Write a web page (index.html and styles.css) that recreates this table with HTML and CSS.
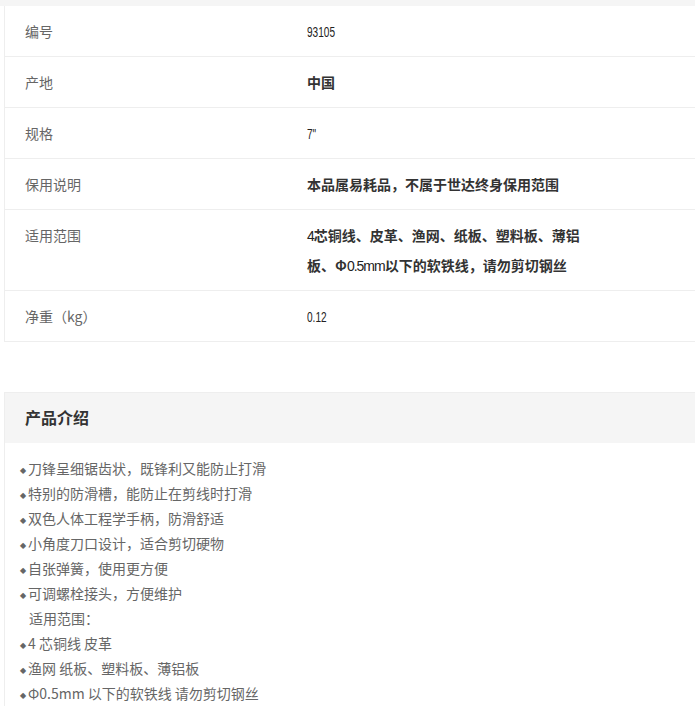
FILE: index.html
```html
<!DOCTYPE html>
<html lang="zh-CN">
<head>
    <meta charset="UTF-8">
    <meta name="viewport" content="width=device-width, initial-scale=1.0">
    <title>产品参数</title>
    <link rel="stylesheet" href="styles.css">
</head>
<body>
    <div class="top-strip"></div>

    <div class="specs">
        <div class="row">
            <div class="label">编号</div>
            <div class="value"><span class="num">93105</span></div>
        </div>
        <div class="row">
            <div class="label">产地</div>
            <div class="value">中国</div>
        </div>
        <div class="row">
            <div class="label">规格</div>
            <div class="value"><span class="num">7"</span></div>
        </div>
        <div class="row">
            <div class="label">保用说明</div>
            <div class="value">本品属易耗品，不属于世达终身保用范围</div>
        </div>
        <div class="row">
            <div class="label">适用范围</div>
            <div class="value"><span class="digits">4</span>芯铜线、皮革、渔网、纸板、塑料板、薄铝板、Φ<span class="digits">0.5mm</span>以下的软铁线，请勿剪切钢丝</div>
        </div>
        <div class="row">
            <div class="label">净重（kg）</div>
            <div class="value"><span class="num">0.12</span></div>
        </div>
    </div>

    <section class="intro">
        <h2>产品介绍</h2>
        <ul class="points">
            <li><span class="dot">◆</span>刀锋呈细锯齿状，既锋利又能防止打滑</li>
            <li><span class="dot">◆</span>特别的防滑槽，能防止在剪线时打滑</li>
            <li><span class="dot">◆</span>双色人体工程学手柄，防滑舒适</li>
            <li><span class="dot">◆</span>小角度刀口设计，适合剪切硬物</li>
            <li><span class="dot">◆</span>自张弹簧，使用更方便</li>
            <li><span class="dot">◆</span>可调螺栓接头，方便维护</li>
            <li class="indent">适用范围：</li>
            <li><span class="dot">◆</span>4 芯铜线 皮革</li>
            <li><span class="dot">◆</span>渔网 纸板、塑料板、薄铝板</li>
            <li><span class="dot">◆</span>Φ0.5mm 以下的软铁线 请勿剪切钢丝</li>
        </ul>
    </section>
</body>
</html>
```

FILE: styles.css
```css
body {
    margin: 0;
    padding: 0;
    background-color: #fff;
    font-family: "Noto Sans CJK SC", "Liberation Sans", sans-serif;
    font-size: 14px;
    color: #666;
    overflow: hidden;
}
.top-strip {
    height: 6px;
    background-color: #f5f5f5;
}
.specs {
    margin-left: 4px;
    border-left: 1px solid #eee;
}
.row {
    display: grid;
    grid-template-columns: 302px 1fr;
    padding: 10px 0;
    line-height: 30px;
    border-bottom: 1px solid #eee;
}
.label {
    padding-left: 20px;
    color: #666;
}
.value {
    max-width: 278px;
    color: #333;
    font-weight: bold;
}
/* condensed digits */
.num {
    display: inline-block;
    line-height: 0;
    font-family: "Liberation Sans", sans-serif;
    font-weight: normal;
    color: #222;
    transform: scaleX(0.72);
    transform-origin: left center;
}
.digits {
    line-height: 0;
    font-family: "Liberation Sans", sans-serif;
    font-weight: normal;
    color: #222;
    letter-spacing: -1px;
}
.intro {
    margin: 50px 0 0 4px;
    border-left: 1px solid #eee;
}
.intro h2 {
    margin: 0;
    padding: 0 20px 2px;
    height: 48px;
    line-height: 48px;
    font-size: 16px;
    color: #333;
    background-color: #f5f5f5;
    border-top: 1px solid #eee;
}
.points {
    list-style: none;
    margin: 0;
    padding: 13px 0 0 15px;
}
.points li {
    height: 25px;
    line-height: 25px;
}
.dot {
    display: inline-block;
    width: 8px;
    line-height: 0;
    font-family: "DejaVu Sans", sans-serif;
    font-size: 8px;
    vertical-align: 1px;
}
.indent {
    padding-left: 9px;
}
```
